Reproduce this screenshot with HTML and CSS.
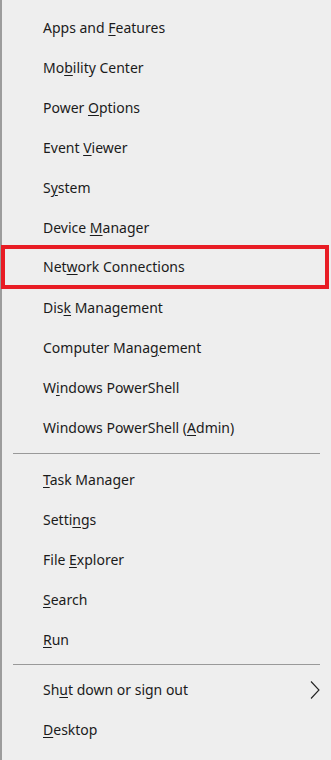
FILE: index.html
```html
<!DOCTYPE html>
<html lang="en">
  <head>
    <meta charset="UTF-8" />
    <meta name="viewport" content="width=device-width, initial-scale=1.0" />
    <title>Quick Link Menu</title>
    <link rel="stylesheet" href="styles.css">
  </head>
  <body>
    <div class="menu">
      <ul class="group">
        <li class="item"><span>Apps and <u>F</u>eatures</span></li>
        <li class="item"><span>Mo<u>b</u>ility Center</span></li>
        <li class="item"><span>Power <u>O</u>ptions</span></li>
        <li class="item"><span>Event <u>V</u>iewer</span></li>
        <li class="item"><span>S<u>y</u>stem</span></li>
        <li class="item"><span>Device <u>M</u>anager</span></li>
        <li class="item selected"><span>Net<u>w</u>ork Connections</span></li>
        <li class="item"><span>Dis<u>k</u> Management</span></li>
        <li class="item"><span>Computer Mana<u>g</u>ement</span></li>
        <li class="item"><span>W<u>i</u>ndows PowerShell</span></li>
        <li class="item"><span>Windows PowerShell (<u>A</u>dmin)</span></li>
      </ul>

      <div class="separator"></div>

      <ul class="group">
        <li class="item"><span><u>T</u>ask Manager</span></li>
        <li class="item"><span>Setti<u>n</u>gs</span></li>
        <li class="item"><span>File <u>E</u>xplorer</span></li>
        <li class="item"><span><u>S</u>earch</span></li>
        <li class="item"><span><u>R</u>un</span></li>
      </ul>

      <div class="separator short"></div>

      <ul class="group">
        <li class="item">
          <span>Sh<u>u</u>t down or sign out</span>
          <svg class="chevron" width="10" height="18" viewBox="0 0 10 18">
            <path d="M1 0.5 L9 9 L1 17.5" fill="none" stroke="#222" stroke-width="1.1" />
          </svg>
        </li>
        <li class="item"><span><u>D</u>esktop</span></li>
      </ul>
    </div>
  </body>
</html>
```

FILE: styles.css
```css
body {
  margin: 0;
  padding: 0;
  background-color: #eeeeee;
  font-family: "Noto Sans", "Open Sans", sans-serif;
}
.menu {
  min-height: 760px;
  box-sizing: border-box;
  border-left: 2px solid #9c9c9c;
  padding-top: 8px;
  background-color: #eeeeee;
}
.group {
  list-style: none;
  margin: 0;
  padding: 0;
}
.item {
  height: 40px;
  box-sizing: border-box;
  display: flex;
  align-items: center;
  padding-left: 41px;
  padding-right: 11px;
  padding-bottom: 1px;
  font-size: 14px;
  color: #1b1b1b;
}
.item u {
  text-underline-offset: 2px;
}
.selected {
  height: 44px;
  margin: -3px 2px -1px -1px;
  padding-left: 38px;
  border: 4px solid #e81c24;
}
.chevron {
  margin-left: auto;
  margin-top: 1px;
}
.separator {
  height: 1px;
  margin: 5px 11px 6px 11px;
  background-color: #999999;
}
.separator.short {
  margin: 4px 11px 5px 11px;
}
```
